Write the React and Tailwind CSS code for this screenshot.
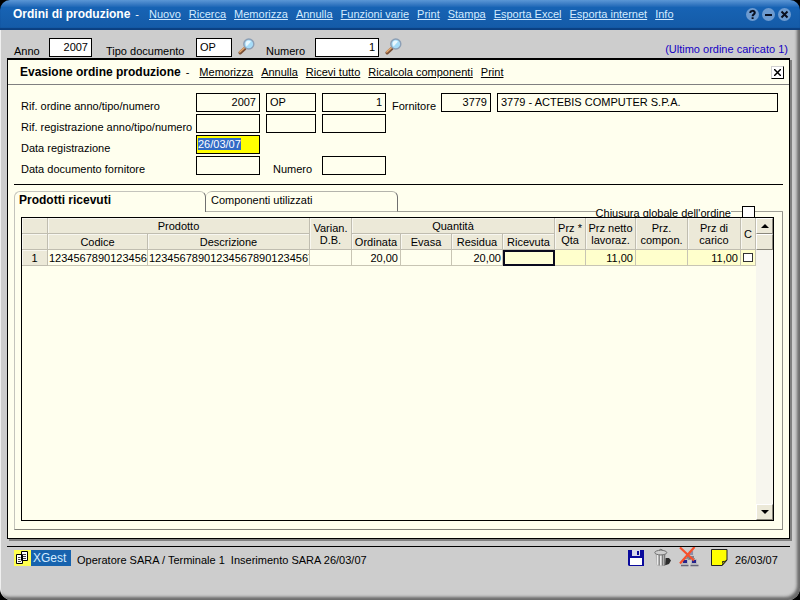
import React, { useEffect, useRef } from 'react';

const mainMenu = [
  'Nuovo',
  'Ricerca',
  'Memorizza',
  'Annulla',
  'Funzioni varie',
  'Print',
  'Stampa',
  'Esporta Excel',
  'Esporta internet',
  'Info',
];

const orderMenu = ['Memorizza', 'Annulla', 'Ricevi tutto', 'Ricalcola componenti', 'Print'];

function Field({ className = '', ...props }) {
  return (
    <input
      type="text"
      className={`h-[19px] border border-black px-[3px] pb-[2px] outline-none ${className}`}
      {...props}
    />
  );
}

function Magnifier() {
  return (
    <svg width="17" height="17" viewBox="0 0 17 17">
      <path d="M2.2 14.8 L6.8 10.4" stroke="#7a5036" strokeWidth="3.4" strokeLinecap="round" />
      <path d="M1.8 14 L6.2 9.8" stroke="#e3a870" strokeWidth="1.6" strokeLinecap="round" />
      <circle cx="10.8" cy="6" r="5" fill="#a6dcf8" stroke="#8c9fb6" strokeWidth="1.4" />
      <path d="M7.6 6 A3.4 3.4 0 0 1 11 2.6 L13 3.6 L8.6 8.4 Z" fill="#e9f8ff" />
    </svg>
  );
}

function WindowButton({ label, children }) {
  return (
    <button aria-label={label} className="h-[13px] w-[13px] rounded-full bg-[#6d9bd0]">
      <svg width="13" height="13" viewBox="0 0 13 13" fill="none" stroke="#0a1020" strokeWidth="2">
        {children}
      </svg>
    </button>
  );
}

function TitleBar() {
  return (
    <header className="flex h-[30px] items-center rounded-t-[10px] bg-linear-to-b from-[#5b97d6] via-[#1763b4] via-25% to-[#145aa6] pr-[9px] pb-[2px] pl-[13px] text-white shadow-[inset_0_-2px_1px_#0b3f80]">
      <h1 className="text-[12px] font-bold">Ordini di produzione</h1>
      <span className="mr-[10px] ml-[5px]">-</span>
      <nav className="flex gap-2 text-[#d3ebff]">
        {mainMenu.map((item) => (
          <a key={item} href="#" className="whitespace-nowrap underline">
            {item}
          </a>
        ))}
      </nav>
      <div className="ml-auto flex gap-[3px]">
        <WindowButton label="Aiuto">
          <path d="M4.3 5 C4.3 2.2 8.8 2.2 8.8 4.8 C8.8 6.4 6.6 6.3 6.6 8.2 M6.6 9.2 V11" />
        </WindowButton>
        <WindowButton label="Riduci">
          <path d="M3 7 H10" />
        </WindowButton>
        <WindowButton label="Chiudi">
          <path d="M3.5 3.5 L9.5 9.5 M9.5 3.5 L3.5 9.5" />
        </WindowButton>
      </div>
    </header>
  );
}

function SearchRow() {
  return (
    <div className="flex h-7 items-end pr-[2px] pb-[1px] pl-[7px]">
      <label htmlFor="anno" className="w-[35px]">Anno</label>
      <Field id="anno" defaultValue="2007" className="w-[43px] bg-white text-right" />
      <label htmlFor="tipo" className="ml-[14px] w-[90px]">Tipo documento</label>
      <Field id="tipo" defaultValue="OP" className="w-9 bg-white" />
      <button aria-label="Cerca tipo documento" className="mr-[11px] mb-[2px] ml-[6px]">
        <Magnifier />
      </button>
      <label htmlFor="numero" className="w-[49px]">Numero</label>
      <Field id="numero" defaultValue="1" className="w-16 bg-white text-right" />
      <button aria-label="Cerca numero" className="mb-[2px] ml-[6px]">
        <Magnifier />
      </button>
      <span className="mb-[2px] ml-auto text-[#1400c4]">(Ultimo ordine caricato 1)</span>
    </div>
  );
}

function OrderForm() {
  const dateRef = useRef(null);

  useEffect(() => {
    dateRef.current.focus();
    dateRef.current.select();
  }, []);

  return (
    <form className="mx-[6px] flex flex-col gap-[2px] border-b border-black pt-2 pr-[5px] pb-[9px] pl-[7px]">
      <div className="flex items-end gap-[6px]">
        <label htmlFor="rifAnno" className="w-[169px]">Rif. ordine anno/tipo/numero</label>
        <Field id="rifAnno" defaultValue="2007" className="w-16 text-right" />
        <Field aria-label="Tipo ordine" defaultValue="OP" className="w-[50px]" />
        <Field aria-label="Numero ordine" defaultValue="1" className="w-16 text-right" />
        <label htmlFor="fornitore" className="w-[43px]">Fornitore</label>
        <Field id="fornitore" defaultValue="3779" className="w-[50px] text-right" />
        <Field
          aria-label="Ragione sociale"
          defaultValue="3779 - ACTEBIS COMPUTER S.P.A."
          className="min-w-0 flex-1"
        />
      </div>
      <div className="flex items-end gap-[6px]">
        <label htmlFor="regAnno" className="w-[169px] whitespace-nowrap">Rif. registrazione anno/tipo/numero</label>
        <Field id="regAnno" className="w-16" />
        <Field aria-label="Tipo registrazione" className="w-[50px]" />
        <Field aria-label="Numero registrazione" className="w-16" />
      </div>
      <div className="flex items-end gap-[6px]">
        <label htmlFor="dataReg" className="w-[169px]">Data registrazione</label>
        <input
          id="dataReg"
          ref={dateRef}
          type="text"
          defaultValue="26/03/07"
          className="h-[19px] w-16 border border-black bg-[#ffff00] px-[1px] pb-[2px] outline-none selection:bg-[#316ac5] selection:text-white"
        />
      </div>
      <div className="flex items-end gap-[6px]">
        <label htmlFor="dataDoc" className="w-[169px]">Data documento fornitore</label>
        <Field id="dataDoc" className="w-16" />
        <label htmlFor="numDoc" className="w-[50px] pl-[7px]">Numero</label>
        <Field id="numDoc" className="w-16" />
      </div>
    </form>
  );
}

const th = 'border-r border-b border-[#c0bdb0] bg-[#ece9d8] p-0 font-normal shadow-[inset_1px_1px_0_#f8f7f0]';
const td = 'overflow-hidden border-r border-b border-[#c8c5b4] p-0 whitespace-nowrap';

function ProductTable() {
  return (
    <table className="w-full table-fixed border-separate border-spacing-0 leading-[12px]">
      <colgroup>
        <col className="w-[26px]" />
        <col className="w-[100px]" />
        <col />
        <col className="w-[42px]" />
        <col className="w-[49px]" />
        <col className="w-[51px]" />
        <col className="w-[51px]" />
        <col className="w-[52px]" />
        <col className="w-[31px]" />
        <col className="w-[50px]" />
        <col className="w-[52px]" />
        <col className="w-[53px]" />
        <col className="w-[15px]" />
      </colgroup>
      <thead>
        <tr className="h-4">
          <th className={th}></th>
          <th colSpan={2} className={th}>Prodotto</th>
          <th rowSpan={2} className={th}>Varian.<br />D.B.</th>
          <th colSpan={4} className={th}>Quantità</th>
          <th rowSpan={2} className={th}>Prz *<br />Qta</th>
          <th rowSpan={2} className={th}>Prz netto<br />lavoraz.</th>
          <th rowSpan={2} className={th}>Prz.<br />compon.</th>
          <th rowSpan={2} className={th}>Prz di<br />carico</th>
          <th rowSpan={2} className={th}>C</th>
        </tr>
        <tr className="h-4">
          <th className={th}></th>
          <th className={th}>Codice</th>
          <th className={th}>Descrizione</th>
          <th className={th}>Ordinata</th>
          <th className={th}>Evasa</th>
          <th className={th}>Residua</th>
          <th className={th}>Ricevuta</th>
        </tr>
      </thead>
      <tbody>
        <tr className="h-4">
          <th scope="row" className={th}>1</th>
          <td className={`${td} pl-[1px]`}>1234567890123456</td>
          <td className={`${td} pl-[1px]`}>123456789012345678901234567</td>
          <td className={td}></td>
          <td className={`${td} pr-[2px] text-right`}>20,00</td>
          <td className={td}></td>
          <td className={`${td} pr-[1px] text-right`}>20,00</td>
          <td className="border-2 border-[#0a0a1e] bg-[#ffffd8] p-0">
            <input aria-label="Ricevuta" className="block h-3 w-full outline-none" />
          </td>
          <td className={`${td} bg-[#ffffcc]`}></td>
          <td className={`${td} bg-[#ffffcc] pr-[2px] text-right`}>11,00</td>
          <td className={`${td} bg-[#ffffcc]`}></td>
          <td className={`${td} bg-[#ffffcc] pr-[2px] text-right`}>11,00</td>
          <td className={`${td} bg-[#ffffcc]`}>
            <input
              type="checkbox"
              aria-label="Chiusura riga"
              className="mx-auto block h-[9px] w-[10px] appearance-none border border-[#333] bg-white"
            />
          </td>
        </tr>
      </tbody>
    </table>
  );
}

function ScrollBar() {
  const raised = 'flex h-4 items-center justify-center border border-t-white border-r-[#8a887c] border-b-[#8a887c] border-l-white bg-[#ece9d8]';
  return (
    <div className="flex w-[17px] shrink-0 flex-col bg-[#f7f6ee]">
      <button aria-label="Su" className={raised}>
        <svg width="8" height="4" viewBox="0 0 8 4"><path d="M0 4 L4 0 L8 4 Z" /></svg>
      </button>
      <div className={raised}></div>
      <button aria-label="Giù" className={`${raised} mt-auto`}>
        <svg width="8" height="4" viewBox="0 0 8 4"><path d="M0 0 L4 4 L8 0 Z" /></svg>
      </button>
    </div>
  );
}

function ProductTabs() {
  return (
    <section className="mx-[6px] mt-[6px] mb-2 flex flex-1 flex-col">
      <div className="relative flex h-[21px]">
        <button className="w-48 rounded-t-[6px] border border-r-[#707070] border-b-0 border-[#c4c4bc] pb-1 pl-1 text-left text-[12px] font-bold">
          Prodotti ricevuti
        </button>
        <button className="w-48 rounded-t-[6px] border border-l-0 border-r-[#707070] border-[#b4b4ac] pb-1 pl-[5px] text-left">
          Componenti utilizzati
        </button>
        <div className="flex-1 border-b border-[#a0a098]"></div>
        {/* sits on the frame line, the grid covers its lower edge */}
        <div className="absolute right-7 -bottom-[7px] flex items-center gap-[11px]">
          <label htmlFor="chiusura" className="bg-[#ffffee]">Chiusura globale dell'ordine</label>
          <input
            id="chiusura"
            type="checkbox"
            className="h-[13px] w-[13px] appearance-none border border-black bg-white"
          />
        </div>
      </div>
      <div className="flex flex-1 flex-col border border-t-0 border-r-[#909088] border-b-[#808078] border-l-[#c4c4bc] pt-[5px] pr-2 pb-2 pl-[6px]">
        <div className="relative flex flex-1 items-stretch border border-black bg-[#ffffee]">
          <div className="min-w-0 flex-1">
            <ProductTable />
          </div>
          <ScrollBar />
        </div>
      </div>
    </section>
  );
}

function OrderWindow() {
  return (
    <main className="flex flex-1 flex-col border border-t-2 border-black bg-[#ffffee] shadow-[2px_2px_0_#808080]">
      <div className="flex h-[25px] items-center border-b border-[#808080] pr-[5px] pl-3">
        <h2 className="text-[12px] font-bold">Evasione ordine produzione</h2>
        <span className="mr-[10px] ml-[5px]">-</span>
        <nav className="flex gap-2">
          {orderMenu.map((item) => (
            <a key={item} href="#" className="underline">
              {item}
            </a>
          ))}
        </nav>
        <button
          aria-label="Chiudi"
          className="ml-auto flex h-[13px] w-[13px] items-center justify-center border border-t-[#d0d0d0] border-r-black border-b-black border-l-[#d0d0d0] bg-white"
        >
          <svg width="7" height="7" viewBox="0 0 7 7" stroke="#000" strokeWidth="1.5">
            <path d="M0 0 L7 7 M7 0 L0 7" />
          </svg>
        </button>
      </div>
      <OrderForm />
      <ProductTabs />
    </main>
  );
}

function StatusBar() {
  return (
    <footer className="mt-[7px] flex h-[54px] items-start border-t border-black pr-2 pl-[7px]">
      <div className="mt-[3px] flex h-4 items-center bg-[#1763ae] text-[12px] text-[#d3ebff]">
        <svg width="17" height="16" viewBox="0 0 17 16">
          <rect width="17" height="16" fill="#ffff50" />
          <path d="M2.5 4.5 H8.5 V13.5 H2.5 Z M7.5 1.5 H13.5 V10.5 H7.5 Z" fill="#fff" stroke="#000" />
          <path d="M4 7.5 H6.5 M4 9.5 H6.5 M4 11.5 H7 M9 4.5 H12 M9 6.5 H12 M9 8.5 H12" stroke="#444" />
        </svg>
        <span className="w-10 pl-[2px]">XGest</span>
      </div>
      <span className="mt-[7px] ml-[6px] whitespace-pre">Operatore SARA / Terminale 1  Inserimento SARA 26/03/07</span>
      <div className="ml-auto flex items-start">
        <button aria-label="Salva" className="mt-[3px]">
          <svg width="16" height="16" viewBox="0 0 16 16">
            <path d="M0 0 H16 V16 H1 L0 15 Z" fill="#0a0a9c" />
            <rect x="4" y="0" width="8" height="6" fill="#d8d8e8" />
            <rect x="9" y="1" width="2" height="4" fill="#0a0a9c" />
            <rect x="2" y="8" width="12" height="7" fill="#fff" />
          </svg>
        </button>
        <button aria-label="Elimina" className="mt-[1px] ml-[10px]">
          <svg width="17" height="19" viewBox="0 0 17 19">
            <path d="M10 10 L15 10 L17 12.5 L15 16 L9 18 Z" fill="#2c2c2c" />
            <path d="M1.5 5 H12 L11.2 17 Q7 19.5 2.5 17 Z" fill="#b4b4b4" />
            <path d="M3.7 7 V16.8 M6.7 7.5 V17.5" stroke="#ececec" strokeWidth="1.4" />
            <path d="M5.2 7 V17.3 M8.5 7 V17.5 M10.5 7 V17" stroke="#7c7c7c" />
            <ellipse cx="6.8" cy="4.6" rx="6" ry="2.3" fill="#cfcfcf" stroke="#707070" />
            <path d="M5 2.4 Q6.8 0 8.8 2.4" fill="#aaa" stroke="#707070" />
          </svg>
        </button>
        <button aria-label="Disconnetti" className="ml-2">
          <svg width="20" height="20" viewBox="0 0 20 20">
            <path d="M11 9 V12 M5 14 V12 H16 V14" fill="none" stroke="#555" />
            <rect x="9.5" y="3.5" width="5" height="5" fill="#8c8ca8" stroke="#c8c8c8" />
            <rect x="3.5" y="12.5" width="5" height="4" fill="#24248c" stroke="#b8b8c0" />
            <rect x="12.5" y="12.5" width="5" height="4" fill="#24248c" stroke="#b8b8c0" />
            <path d="M8 10 H15 M2 18.5 H9.5 M11.5 18.5 H19.5" stroke="#66667a" strokeWidth="1.6" />
            <path d="M1 0.5 L15 13.5 M15.5 0 L1 16.5" stroke="#f8502c" strokeWidth="2.2" />
          </svg>
        </button>
        <button aria-label="Note" className="mt-[2px] ml-3">
          <svg width="17" height="17" viewBox="0 0 17 17">
            <path d="M0.5 0.5 H16 V11 L11 16.5 H0.5 Z" fill="#ffff00" stroke="#222" />
            <path d="M16 11 Q14 13 11.5 12.5 Q12.5 15 11 16.5 Z" fill="#c8c800" stroke="#222" />
          </svg>
        </button>
        <span className="mt-[7px] w-[54px] pl-[7px]">26/03/07</span>
      </div>
    </footer>
  );
}

export default function App() {
  return (
    <div className="flex min-h-screen flex-col bg-black font-['Liberation_Sans',Arial,sans-serif] text-[11px] leading-[12px] text-black">
      <TitleBar />
      <div className="flex flex-1 flex-col rounded-b-[12px] bg-[#cdcdcd] pr-[10px] pl-[7px] shadow-[inset_-3px_-3px_3px_#6a6a6a,inset_1px_0_0_#f0f0f0]">
        <SearchRow />
        <OrderWindow />
        <StatusBar />
      </div>
    </div>
  );
}
